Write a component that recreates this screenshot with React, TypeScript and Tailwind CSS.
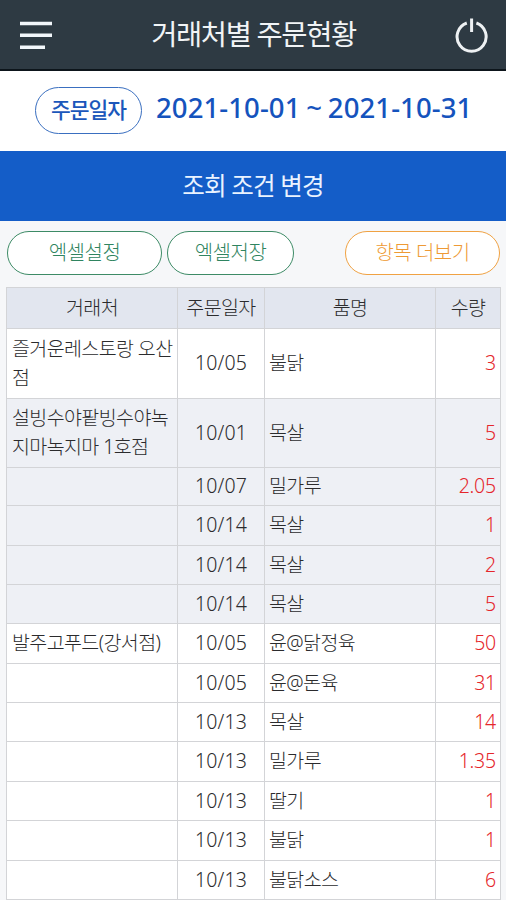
interface OrderRow {
  client: string[];
  date: string;
  item: string;
  qty: string;
  shaded?: boolean;
  height: string;
}

const H38 = 'h-[38px]';
const H39 = 'h-[39px]';
const H40 = 'h-[40px]';

const ROWS: OrderRow[] = [
  { client: ['즐거운레스토랑 오산', '점'], date: '10/05', item: '불닭', qty: '3', height: 'h-[70px]' },
  { client: ['설빙수야팥빙수야녹', '지마녹지마 1호점'], date: '10/01', item: '목살', qty: '5', shaded: true, height: 'h-[69px]' },
  { client: [], date: '10/07', item: '밀가루', qty: '2.05', shaded: true, height: H38 },
  { client: [], date: '10/14', item: '목살', qty: '1', shaded: true, height: H40 },
  { client: [], date: '10/14', item: '목살', qty: '2', shaded: true, height: H39 },
  { client: [], date: '10/14', item: '목살', qty: '5', shaded: true, height: H39 },
  { client: ['발주고푸드(강서점)'], date: '10/05', item: '윤@닭정육', qty: '50', height: H40 },
  { client: [], date: '10/05', item: '윤@돈육', qty: '31', height: H39 },
  { client: [], date: '10/13', item: '목살', qty: '14', height: H39 },
  { client: [], date: '10/13', item: '밀가루', qty: '1.35', height: H40 },
  { client: [], date: '10/13', item: '딸기', qty: '1', height: H39 },
  { client: [], date: '10/13', item: '불닭', qty: '1', height: H40 },
  { client: [], date: '10/13', item: '불닭소스', qty: '6', height: H39 },
];

const COLS = 'grid grid-cols-[171px_87px_171px_65px]';
const CELL = 'flex items-center border-r border-b border-[#d3d4d7] pb-[2px]';

function Header() {
  return (
    <header className="flex h-[71px] items-center justify-between border-b-2 border-[#0d151b] bg-[#2e3a43] pr-[16px] pl-[19px]">
      <button aria-label="메뉴">
        <svg width="34" height="30" viewBox="0 0 34 30" fill="none" stroke="#f2f7fb" strokeWidth="3.4">
          <path d="M1 3.5h32M1 15.3h32M1 27.3h25" />
        </svg>
      </button>
      <h1 className="text-[28.5px] leading-none tracking-[-1.4px] whitespace-nowrap text-[#f1f4f6]">
        거래처별 주문현황
      </h1>
      <button aria-label="로그아웃">
        <svg width="36" height="38" viewBox="0 0 36 38" fill="none" stroke="#eef1f3" strokeWidth="3">
          <path d="M12.8 7A14.5 14.5 0 1 0 22.4 7M17.6 2.5v13.5" />
        </svg>
      </button>
    </header>
  );
}

export default function App() {
  return (
    <div className="h-[900px] w-[506px] overflow-hidden bg-[#f6f7f9] font-['Noto_Sans','Noto_Sans_CJK_KR',sans-serif]">
      <Header />

      <div className="flex h-[80px] items-start bg-white pt-[16px] pl-[35px]">
        <span className="flex h-[47px] w-[107px] items-center justify-center rounded-full border border-[#3a6fc0] text-[21.5px] font-medium tracking-[-1px] text-[#1b57bb]">
          주문일자
        </span>
        <span className="ml-[14px] pt-px text-[27.5px] leading-[40px] font-medium tracking-[0.1px] whitespace-nowrap text-[#1553bd] [word-spacing:-1.5px]">
          2021-10-01 ~ 2021-10-31
        </span>
      </div>

      <button className="flex h-[70px] w-full items-center justify-center bg-[#145dc8] text-[24.5px] tracking-[-0.8px] text-[#eaf3ff]">
        조회 조건 변경
      </button>

      <div className="flex h-[66px] gap-[5px] pt-[10px] pr-[6px] pl-[7px] text-[20px] font-light tracking-[-0.5px]">
        <button className="h-[44px] w-[155px] rounded-full border-[1.5px] border-[#3d8b66] bg-white text-[#2f8460]">
          엑셀설정
        </button>
        <button className="h-[44px] w-[127px] rounded-full border-[1.5px] border-[#3d8b66] bg-white text-[#2f8460]">
          엑셀저장
        </button>
        <button className="ml-auto h-[44px] w-[155px] rounded-full border-[1.5px] border-[#f0a243] bg-white text-[#ee9a35]">
          항목 더보기
        </button>
      </div>

      <div className="ml-[6px] w-[495px] border-t border-l border-[#d3d4d7] text-[19.5px] leading-[29px] font-light tracking-[-0.6px] whitespace-nowrap text-[#2b2b2d]">
        <div className={`${COLS} h-[41px] bg-[#e2e6ef]`}>
          <div className={`${CELL} justify-center`}>거래처</div>
          <div className={`${CELL} justify-center`}>주문일자</div>
          <div className={`${CELL} justify-center`}>품명</div>
          <div className={`${CELL} justify-center`}>수량</div>
        </div>
        {ROWS.map((row, i) => (
          <div key={i} className={`${COLS} ${row.height} ${row.shaded ? 'bg-[#eef0f5]' : 'bg-white'}`}>
            <div className={`${CELL} pl-[5px]`}>
              <div>
                {row.client.map((line) => (
                  <div key={line}>{line}</div>
                ))}
              </div>
            </div>
            <div className={`${CELL} justify-center tracking-[0.1px]`}>{row.date}</div>
            <div className={`${CELL} pl-[4px]`}>{row.item}</div>
            <div className={`${CELL} justify-end pr-[4px] tracking-[-0.2px] text-[#e5262b]`}>{row.qty}</div>
          </div>
        ))}
      </div>
    </div>
  );
}
